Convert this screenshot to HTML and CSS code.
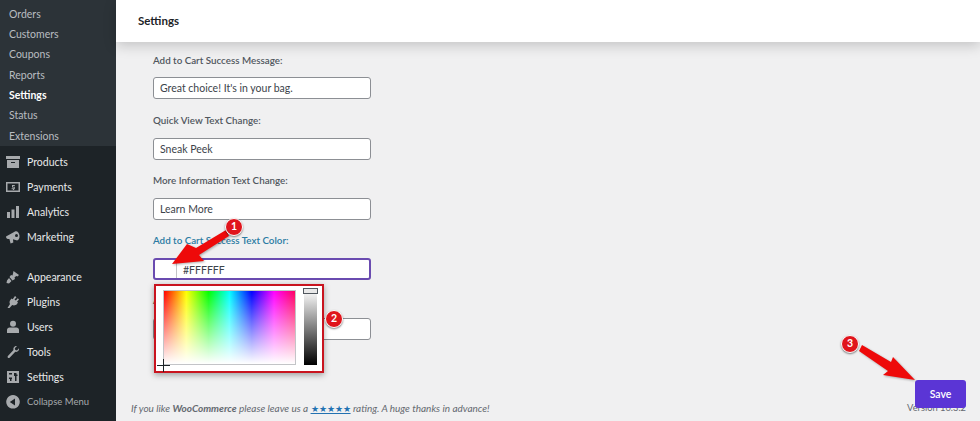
FILE: index.html
```html
<!DOCTYPE html>
<html lang="en">

<head>
  <meta charset="UTF-8">
  <meta name="viewport" content="width=device-width, initial-scale=1.0">
  <title>Settings</title>

  <link rel="stylesheet" href="styles.css">
</head>

<body>
  <div class="app">
    <nav class="sidebar">
      <ul class="submenu">
        <li>Orders</li>
        <li>Customers</li>
        <li>Coupons</li>
        <li>Reports</li>
        <li class="current">Settings</li>
        <li>Status</li>
        <li>Extensions</li>
      </ul>
      <ul class="menu">
        <li>
          <svg class="icon" viewBox="0 0 14 14"><path d="M0 1h14v3H0zM1 5h12v8H1z"/><path class="cut" d="M5 7h4v1H5z"/></svg>
          Products
        </li>
        <li>
          <svg class="icon" viewBox="0 0 14 14"><path fill-rule="evenodd" d="M0 2h14v10H0zM1.500 3.500v7h11v-7z"/><path d="M8.800 5H6v2.500h1.800v.8H5.600v1H7v.7h1V9.300h.8V6.800H7V6h1.800z"/></svg>
          Payments
        </li>
        <li>
          <svg class="icon" viewBox="0 0 14 14"><path d="M1 7h3v6H1zM5.500 4.500h3V13h-3zM10 1h3v12h-3z"/></svg>
          Analytics
        </li>
        <li>
          <svg class="icon" viewBox="0 0 14 14"><path d="M0 6.500 9 1.500c1.800-1.300 4.200 1 4.500 4s-1.200 5.500-3.200 4.800L7 9.300 7.300 12.500 4.600 13.500 3.400 9H2C.8 9 0 7.800 0 6.500z"/><circle class="cut" cx="10.500" cy="5.500" r="1.500"/></svg>
          Marketing
        </li>
        <li class="gap">
          <svg class="icon" viewBox="0 0 14 14"><path d="M7.500 1l5.500 4-1.500 1.500-1.300-.5L8.500 7.500 9 9 6.500 10.500 3.500 7 5 5 6.500 5.500 7 3.500zM3 8l2.500 3-2.500 2.500-2.500-.5.500-2.500z"/></svg>
          Appearance
        </li>
        <li>
          <svg class="icon" viewBox="0 0 14 14"><path d="M9 1l1.500 1.200L8.500 4.500l1.300 1 2-2.300 1.200 1.300-2 2.300 1 .7-1 1.500c-1.300 1.500-3.300 1.800-4.800 1L3.500 13 1.500 13l2.500-4c-.8-1.200-.6-3 .5-4.300L5.500 3.500l1.200.8z"/></svg>
          Plugins
        </li>
        <li>
          <svg class="icon" viewBox="0 0 14 14"><circle cx="7" cy="3.800" r="3"/><path d="M1 13V9.800C1 8.500 2.200 7.500 3.500 7.500h7c1.300 0 2.500 1 2.500 2.300V13z"/></svg>
          Users
        </li>
        <li>
          <svg class="icon" viewBox="0 0 14 14"><path d="M13 3.200c.5 2-1.300 4.200-3.700 3.600L3.600 12.800c-1 1-2.800-.6-1.700-1.800L7.500 5C6.800 2.500 9 .5 11 1L8.800 3.200l.5 1.800 1.700.4z"/></svg>
          Tools
        </li>
        <li>
          <svg class="icon" viewBox="0 0 14 14"><path fill-rule="evenodd" d="M1 1h12v12H1zM3 3v1.500h3V3zM8 3v3h1v5h1.500V6H11.500V4.500h-1V3zM3 7.500V9h1v2h1.500V9H6V7.500z"/></svg>
          Settings
        </li>
        <li class="collapse">
          <svg class="icon" viewBox="0 0 14 14"><path fill-rule="evenodd" d="M7 0a6.800 6.800 0 1 0 .001 0zM9 3.500v7L3.800 7z"/></svg>
          Collapse Menu
        </li>
      </ul>
    </nav>

    <main class="content">
      <header class="topbar">Settings</header>

      <form class="settings-form">
        <div class="field">
          <label>Add to Cart Success Message:</label>
          <div class="text-input">Great choice! It's in your bag.</div>
        </div>
        <div class="field">
          <label>Quick View Text Change:</label>
          <div class="text-input">Sneak Peek</div>
        </div>
        <div class="field">
          <label>More Information Text Change:</label>
          <div class="text-input">Learn More</div>
        </div>
        <div class="field">
          <label class="active">Add to Cart Success Text Color:</label>
          <div class="text-input color-input">
            <span class="swatch"></span>
            <span class="hex">#FFFFFF</span>
          </div>
        </div>
        <div class="field">
          <label>Add to Cart Text Color:</label>
          <div class="text-input"></div>
        </div>
      </form>

      <footer class="footer">
        <p>If you like <strong>WooCommerce</strong> please leave us a <a href="#">★★★★★</a> rating. A huge thanks in advance!</p>
        <span class="version">Version 10.3.2</span>
      </footer>
    </main>
  </div>

  <div class="picker">
    <div class="picker-field">
      <span class="crosshair"></span>
    </div>
    <div class="picker-slider">
      <span class="slider-handle"></span>
    </div>
  </div>

  <button class="save-btn" type="button">Save</button>

  <svg class="arrows" viewBox="0 0 980 421">
    <path class="arrow" d="M226 230 196 248 187 244 172 264 204 261 199 255 229 236z"/>
    <path class="arrow" d="M862 345 891 362 893 357 915 380 883 375 888 371 859 351z"/>
  </svg>
  <span class="badge badge-one">1</span>
  <span class="badge badge-two">2</span>
  <span class="badge badge-three">3</span>
</body>

</html>
```

FILE: styles.css
```css
* {
  box-sizing: border-box;
}

html,
body {
  margin: 0;
  height: 421px;
  overflow: hidden;
}

body {
  position: relative;
  font-family: 'Lato', 'Open Sans', sans-serif;
  background-color: #f0f0f1;
  color: #3c434a;
}

.app {
  display: flex;
  height: 421px;
}

/* admin sidebar */
.sidebar {
  width: 116px;
  flex-shrink: 0;
  background-color: #1d2327;
  font-size: 10.500px;
}

.sidebar ul {
  list-style: none;
  margin: 0;
  padding: 0;
}

.submenu {
  background-color: #2c3338;
  height: 146px;
  padding-top: 3.500px !important;
}

.submenu li {
  height: 20.400px;
  line-height: 20.400px;
  padding-left: 9px;
  color: #b9bdc1;
}

.submenu .current {
  color: #ffffff;
  font-weight: 700;
}

.menu {
  padding-top: 3px !important;
}

.menu li {
  display: flex;
  align-items: center;
  gap: 7px;
  height: 25px;
  padding-left: 6px;
  color: #e8e9ea;
}

.menu .gap {
  margin-top: 15px;
}

.menu .collapse {
  color: #a7aaad;
  font-size: 9.500px;
}

.icon {
  width: 14px;
  height: 14px;
  flex-shrink: 0;
  fill: #a7aaad;
}

.icon .cut {
  fill: #1d2327;
}

/* main column */
.content {
  flex: 1;
  display: flex;
  flex-direction: column;
  min-width: 0;
}

.topbar {
  height: 42px;
  line-height: 41px;
  padding-left: 22px;
  background-color: #ffffff;
  box-shadow: 0 4px 12px rgba(0, 0, 0, 0.18);
  color: #1d2327;
  font-size: 11.500px;
  font-weight: 700;
}

.settings-form {
  padding: 11px 0 0 37px;
  flex: 1;
}

.field {
  height: 60px;
}

.field:first-child {
  height: 61px;
}

.field label {
  display: block;
  height: 24px;
  line-height: 14px;
  font-size: 9.800px;
  font-weight: 600;
  color: #50575e;
}

.field + .field label {
  line-height: 12px;
}

.field label.active {
  color: #2a7ba3;
}

.text-input {
  width: 218px;
  height: 22px;
  line-height: 21px;
  padding-left: 6px;
  background-color: #ffffff;
  border: 1px solid #8c8f94;
  border-radius: 3px;
  color: #3c434a;
  font-size: 10.500px;
}

.color-input {
  display: flex;
  padding-left: 0;
  border: 2px solid #6a4bb0;
}

.swatch {
  width: 22px;
  border-right: 1px solid #c3c4c7;
}

.hex {
  padding-left: 6px;
}

.footer {
  display: flex;
  justify-content: space-between;
  height: 19px;
  padding: 0 14px 0 15px;
  font-size: 10px;
  color: #646970;
}

.footer p {
  margin: 0;
  font-style: italic;
}

.footer a {
  color: #2271b1;
  font-size: 8.500px;
  font-style: normal;
}

.version {
  font-size: 9.300px;
}

/* things lying over the page */
.picker {
  position: absolute;
  left: 154px;
  top: 284px;
  width: 170px;
  height: 89px;
  display: flex;
  gap: 8px;
  padding: 4px 5px 7px 7px;
  background-color: #ffffff;
  border: 2.500px solid #c9141f;
  box-shadow: 0 2px 6px rgba(0, 0, 0, 0.35);
}

.picker-field {
  position: relative;
  width: 133px;
  height: 75px;
  background:
    linear-gradient(to top, #ffffff 0%, rgba(255, 255, 255, 0) 100%),
    linear-gradient(to right, #ff0000, #ffff00 17%, #00ff00 34%, #00ffff 50%, #0000ff 67%, #ff00ff 84%, #ff0060);
  border: 1px solid #c3c4c7;
}

.crosshair {
  position: absolute;
  left: -7px;
  bottom: -8px;
  width: 13px;
  height: 13px;
  background:
    linear-gradient(#1d2327, #1d2327) center / 13px 1px no-repeat,
    linear-gradient(#1d2327, #1d2327) center / 1px 13px no-repeat;
}

.picker-slider {
  position: relative;
  width: 13px;
  height: 75px;
  background: linear-gradient(to bottom, #ffffff, #000000);
}

.slider-handle {
  position: absolute;
  left: -1px;
  top: -2px;
  width: 15px;
  height: 6px;
  background-color: #e8e8e8;
  border: 1px solid #50575e;
}

.save-btn {
  position: absolute;
  left: 915px;
  top: 380px;
  width: 51px;
  height: 28px;
  padding: 0;
  background-color: #5b35d5;
  border: 0;
  border-radius: 3px;
  color: #ffffff;
  font-family: inherit;
  font-size: 10.500px;
  font-weight: 600;
}

.arrows {
  position: absolute;
  left: 0;
  top: 0;
  width: 980px;
  height: 421px;
  pointer-events: none;
}

.arrow {
  fill: #ee0a0a;
  filter: drop-shadow(1px 1px 1px rgba(0, 0, 0, 0.3));
}

.badge {
  position: absolute;
  width: 18px;
  height: 18px;
  line-height: 15px;
  text-align: center;
  background-color: #e0141c;
  border: 1.500px solid #ffffff;
  border-radius: 50%;
  box-shadow: 0 1px 2px rgba(0, 0, 0, 0.5);
  color: #ffffff;
  font-size: 10.500px;
  font-weight: 700;
}

.badge-one {
  left: 225px;
  top: 218px;
}

.badge-two {
  left: 325px;
  top: 310px;
}

.badge-three {
  left: 841px;
  top: 335px;
}
```
